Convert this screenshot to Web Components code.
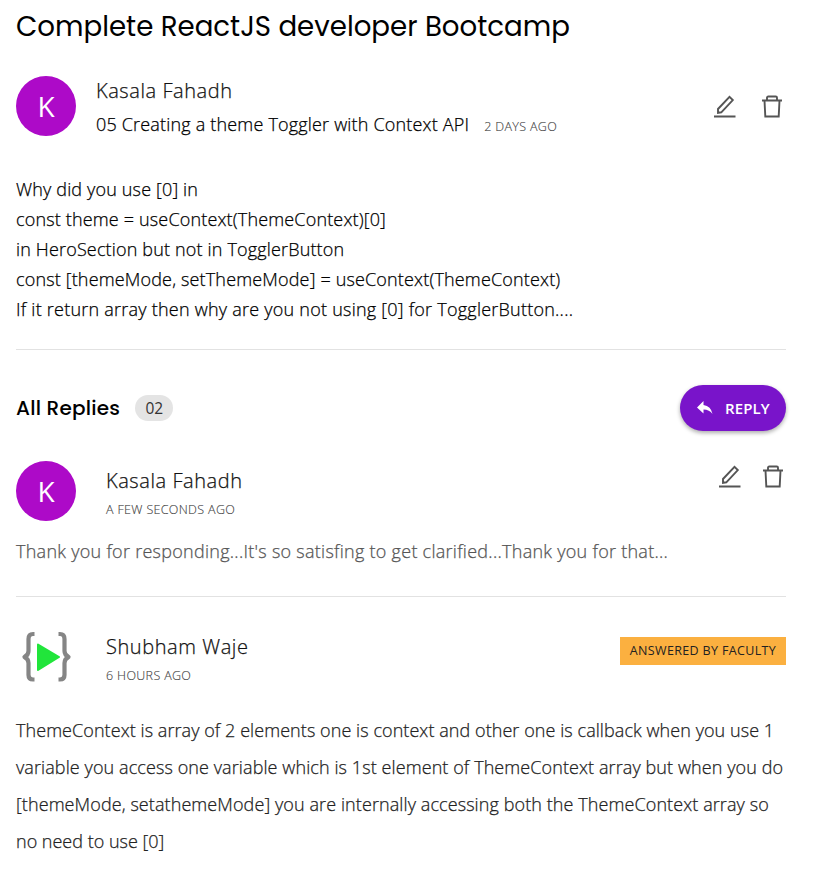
<!DOCTYPE html>
<html lang="en"><head><meta charset="utf-8"><title>Complete ReactJS developer Bootcamp</title>
<style>body{margin:0;background:#fff;font-family:"Open Sans",sans-serif;color:#000}</style></head><body>
<discussion-page></discussion-page>
<script>
const define=(name,css,html)=>customElements.define(name,class extends HTMLElement{constructor(){super();this.attachShadow({mode:'open'}).innerHTML=`<style>${css}</style>${html}`;}});
define('user-avatar',`:host{display:flex;flex:none;align-items:center;justify-content:center;width:60px;height:60px;border-radius:50%;background:#ad0ac8;color:#fff;font:28px/60px "Open Sans",sans-serif}`,`<slot></slot>`);
define('code-logo',`:host{display:block;flex:none;width:60px;height:60px}svg{display:block}`,`<svg width="60" height="60" viewBox="0 0 60 60" fill="none"><path d="M19 8h-1.500q-4.500 0-4.500 5v12q0 4-4 6q4 2 4 6v12q0 4.500 4.500 4.500H19M43 8h1.500q4.500 0 4.500 5v12q0 4 4 6q-4 2-4 6v12q0 4.500-4.500 4.500H43" transform="translate(-.500 0)" stroke="#858585" stroke-width="4.200" stroke-linejoin="round"/><path d="M22 18.500L43 31L22 44Z" fill="#21e53b" stroke="#21e53b" stroke-width="2" stroke-linejoin="round"/></svg>`);
define('edit-actions',`:host{display:flex;flex:none;gap:var(--gap,25px)}svg{display:block}`,`<svg width="22" height="24" viewBox="0 0 22 24" fill="none" stroke="#555" stroke-width="1.900"><path d="M0 21.500H21.500M4 17.800v-3.800L15.500 1.800l3.300 3.300L7.300 17.300Z"/></svg><svg width="22" height="24" viewBox="0 0 22 24" fill="none" stroke="#555" stroke-width="1.900"><path d="M1 5.500h20M6 5V2.800q0-1.300 1.300-1.300h7.400q1.300 0 1.300 1.300V5M3.500 5.500l.8 16h13.400l.8-16"/></svg>`);
define('count-badge',`:host{display:block;background:#e4e4e4;border-radius:13px;width:38px;height:26px;text-align:center;font:500 15.500px/27px "Open Sans",sans-serif;color:#333}`,`<slot></slot>`);
define('reply-button',`:host{display:flex;box-sizing:border-box;align-items:center;gap:12px;width:106px;height:46px;padding-left:17px;border-radius:23px;background:#7914ca;color:#fff;font:600 15px/46px "Open Sans",sans-serif;letter-spacing:.1px;box-shadow:0 2px 4px #0005}`,`<svg width="16" height="14" viewBox="0 0 16 14"><path d="M6.500 0v4q7.500 1 9 9-3-4.500-9-4.500v4L0 6.500z" fill="#fff"/></svg><slot></slot>`);
define('faculty-badge',`:host{display:block;background:#fbb040;width:166px;height:28px;text-align:center;font:12.500px/28px "Open Sans",sans-serif;letter-spacing:.35px;color:#222}`,`<slot></slot>`);
define('author-info',`:host{display:block}.name{font-size:20px;line-height:28px;font-weight:300;letter-spacing:.57px;color:#111}`,`<div class="name"><slot name="name"></slot></div><slot></slot>`);
define('text-lines',`:host{display:block;white-space:nowrap}`,`<slot></slot>`);
define('discussion-page',`:host{display:block;box-sizing:border-box;height:875px;padding:9px 27px 0 16px}
h1{margin:0;font:400 27.650px/36px Poppins,"Open Sans",sans-serif}
h2{margin:0;font:500 20px/30px Poppins,"Open Sans",sans-serif;letter-spacing:.22px}
.row{display:flex;align-items:flex-start}
.first{margin-top:31px;height:82px;gap:20px}.first author-info{padding-top:1px}
author-info,text-lines{-webkit-text-stroke:.25px currentColor}
.lesson{display:flex;align-items:baseline;gap:15px;margin-top:4px;font-size:18px;line-height:30px;font-weight:300;letter-spacing:.18px}
.time{font-size:12.500px;line-height:20px;font-weight:300;color:#444;letter-spacing:.34px;-webkit-text-stroke-width:.12px}
.question{margin-top:16px;font-size:18px;line-height:30px;font-weight:300;letter-spacing:.16px}
.last{letter-spacing:.235px}
hr{border:0;border-top:1px solid #e2e2e2;margin:0}
.sp{margin-left:auto}
.replies{align-items:center;margin-top:35px;height:46px;gap:15px}
.reply{gap:30px;height:75px}
.thanks{font-size:18px;line-height:30px;font-weight:300;letter-spacing:.27px;color:#555}
.answer{margin-top:11px;font-size:18px;line-height:37px;font-weight:300;letter-spacing:.09px;color:#222}`,
`<h1>Complete ReactJS developer Bootcamp</h1>
<div class="row first"><user-avatar>K</user-avatar><author-info><span slot="name">Kasala Fahadh</span><div class="lesson"><span>05 Creating a theme Toggler with Context API</span><span class="time">2 DAYS AGO</span></div></author-info><edit-actions class="sp" style="margin-top:19px;padding-right:3px"></edit-actions></div>
<text-lines class="question">Why did you use [0] in<br>const theme = useContext(ThemeContext)[0]<br>in HeroSection but not in TogglerButton<br>const [themeMode, setThemeMode] = useContext(ThemeContext)<br><span class="last">If it return array then why are you not using [0] for TogglerButton....</span></text-lines>
<hr style="margin-top:25px">
<div class="row replies"><h2>All Replies</h2><count-badge>02</count-badge><reply-button class="sp">REPLY</reply-button></div>
<div class="row reply" style="margin-top:30px"><user-avatar>K</user-avatar><author-info style="padding-top:6px"><span slot="name">Kasala Fahadh</span><div class="time" style="margin-top:5px">A FEW SECONDS AGO</div></author-info><edit-actions class="sp" style="--gap:21px;margin-top:4px;padding-right:2px"></edit-actions></div>
<text-lines class="thanks">Thank you for responding...It's so satisfing to get clarified...Thank you for that...</text-lines>
<hr style="margin-top:30px">
<div class="row reply" style="margin-top:29px"><code-logo></code-logo><author-info style="padding-top:7px"><span slot="name">Shubham Waje</span><div class="time" style="margin-top:5px">6 HOURS AGO</div></author-info><faculty-badge class="sp" style="margin-top:11px">ANSWERED BY FACULTY</faculty-badge></div>
<text-lines class="answer"><span style="letter-spacing:.065px">ThemeContext is array of 2 elements one is context and other one is callback when you use 1</span><br>variable you access one variable which is 1st element of ThemeContext array but when you do<br>[themeMode, setathemeMode] you are internally accessing both the ThemeContext array so<br><span style="letter-spacing:0">no need to use [0]</span></text-lines>`);
</script></body></html>
